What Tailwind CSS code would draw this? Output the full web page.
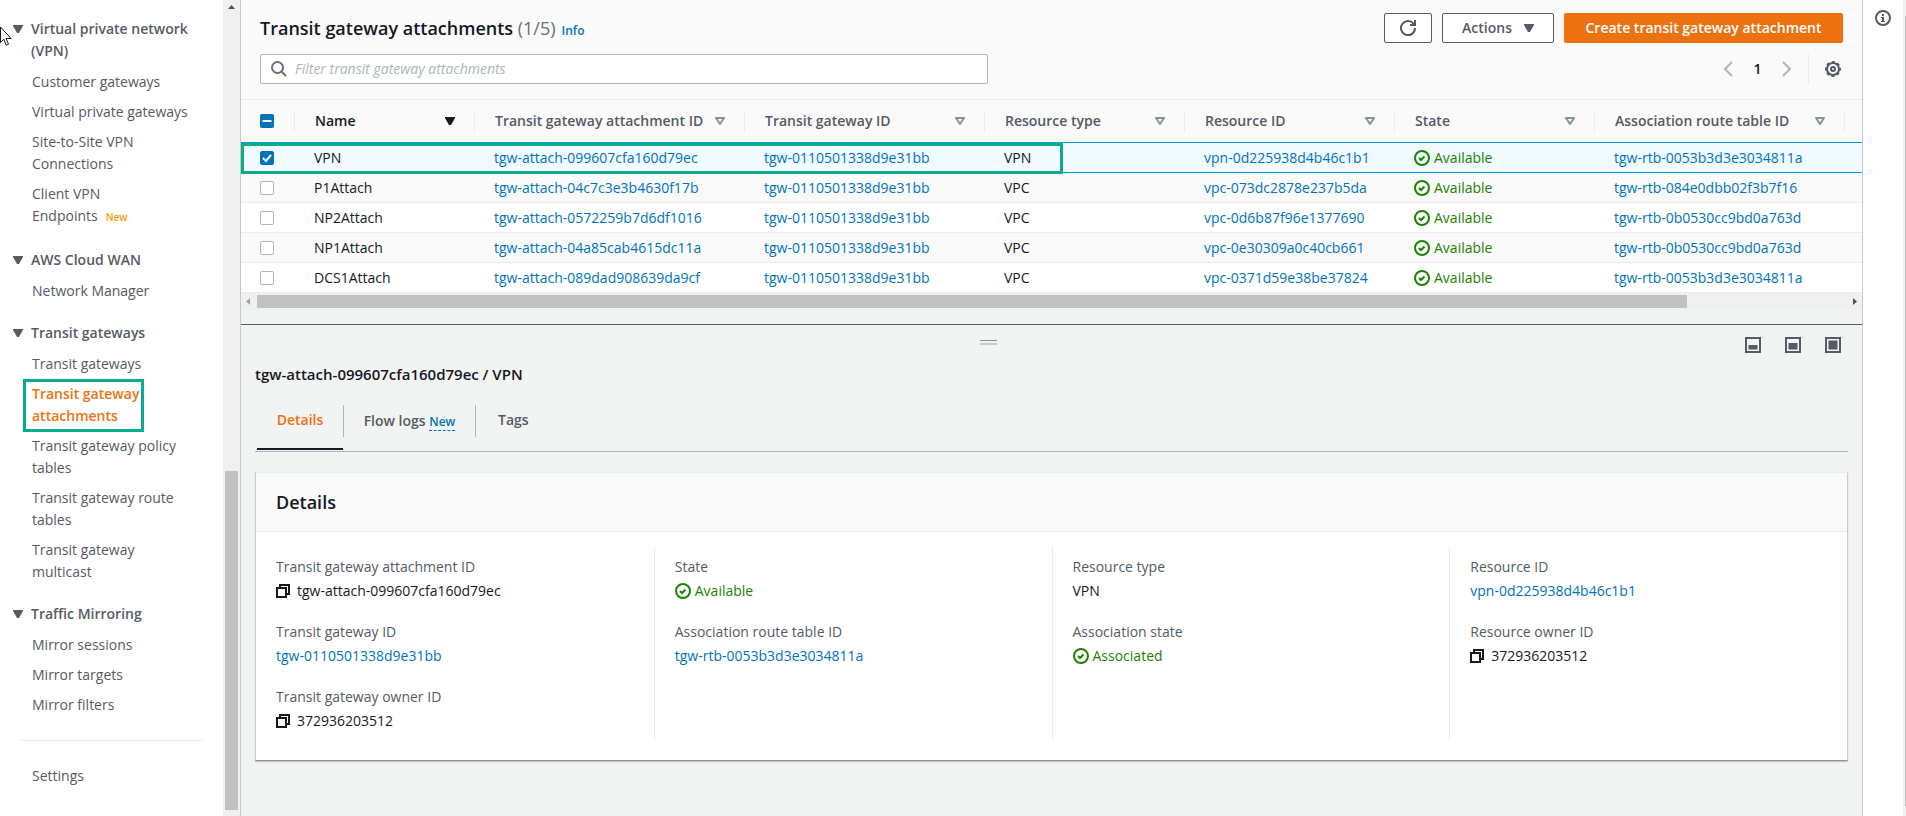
<!DOCTYPE html>
<html lang="en">
<head>
<meta charset="utf-8">
<title>Transit gateway attachments</title>
<script src="https://cdn.jsdelivr.net/npm/@tailwindcss/browser@4"></script>
</head>
<body class="h-screen overflow-hidden bg-white font-['Open_Sans','Noto_Sans',sans-serif] text-sm leading-[22px] text-[#16191f]">
<svg class="hidden" aria-hidden="true">
  <symbol id="caret" viewBox="0 0 10 8"><path d="M0 0h10v1L6 8H4L0 1z" fill="currentColor"/></symbol>
  <symbol id="sort" viewBox="0 0 10 8"><path d="M1 1h8L5 7z" fill="none" stroke="currentColor" stroke-width="2" stroke-linejoin="round"/></symbol>
  <symbol id="ok" viewBox="0 0 16 16"><g fill="none" stroke="currentColor" stroke-width="2"><circle cx="8" cy="8" r="7"/><path d="M5 8l2 2 3.500-3.500"/></g></symbol>
  <symbol id="copy" viewBox="0 0 14 14"><path d="M1 4h9v9H1zM4 4V1h9v9h-3" fill="none" stroke="currentColor" stroke-width="2"/></symbol>
</svg>
<div class="flex h-full">
  <nav class="h-full min-w-0 w-[223px] shrink-0 overflow-hidden pt-[18px] text-[#545b64]" aria-label="VPC">
    <section class="mb-[17px]">
      <h3 class="mb-[5px] flex pl-[13px] font-semibold"><svg class="mt-[7px] mr-2 h-2 w-[10px] shrink-0"><use href="#caret"/></svg><span>Virtual private network<br>(VPN)</span></h3>
      <ul class="pl-8">
        <li class="py-1"><a href="#">Customer gateways</a></li>
        <li class="py-1"><a href="#">Virtual private gateways</a></li>
        <li class="py-1"><a href="#">Site-to-Site VPN<br>Connections</a></li>
        <li class="py-1"><a href="#">Client VPN<br>Endpoints</a><span class="ml-2 text-[10px] font-semibold text-[#ff9900]">New</span></li>
      </ul>
    </section>
    <section class="mb-4">
      <h3 class="mb-[5px] flex pl-[13px] font-semibold"><svg class="mt-[7px] mr-2 h-2 w-[10px] shrink-0"><use href="#caret"/></svg>AWS Cloud WAN</h3>
      <ul class="pl-8"><li class="py-1"><a href="#">Network Manager</a></li></ul>
    </section>
    <section class="mb-4">
      <h3 class="mb-[5px] flex pl-[13px] font-semibold"><svg class="mt-[7px] mr-2 h-2 w-[10px] shrink-0"><use href="#caret"/></svg>Transit gateways</h3>
      <ul class="pl-8">
        <li class="py-1"><a href="#">Transit gateways</a></li>
        <li class="relative py-1"><a href="#" class="font-semibold text-[#ec7211]" aria-current="page">Transit gateway<br>attachments</a><span class="pointer-events-none absolute top-0 -left-[9px] h-[53px] w-[121px] border-3 border-[#0aac8e]"></span></li>
        <li class="py-1"><a href="#">Transit gateway policy<br>tables</a></li>
        <li class="py-1"><a href="#">Transit gateway route<br>tables</a></li>
        <li class="py-1"><a href="#">Transit gateway<br>multicast</a></li>
      </ul>
    </section>
    <section>
      <h3 class="mb-[5px] flex pl-[13px] font-semibold"><svg class="mt-[7px] mr-2 h-2 w-[10px] shrink-0"><use href="#caret"/></svg>Traffic Mirroring</h3>
      <ul class="pl-8">
        <li class="py-1"><a href="#">Mirror sessions</a></li>
        <li class="py-1"><a href="#">Mirror targets</a></li>
        <li class="py-1"><a href="#">Mirror filters</a></li>
      </ul>
    </section>
    <hr class="my-5 mr-5 ml-5 border-[#eaeded]">
    <a href="#" class="block py-1 pl-8">Settings</a>
  </nav>
  <div class="flex w-[17px] shrink-0 flex-col items-center bg-[#f0f0f0] pb-[6px]" aria-hidden="true">
    <svg class="mt-[5px] h-1 w-[7px]" viewBox="0 0 7 4"><path d="M0 4h7L3.500 0z" fill="#505050"/></svg>
    <div class="grow"></div>
    <div class="h-[339px] w-[13px] bg-[#c1c1c1]"></div>
  </div>

  <main class="flex min-w-0 grow flex-col border-x border-[#c3c9cc] bg-[#f2f3f3]">
    <section class="bg-[#fafafa]">
      <div class="flex items-center gap-[10px] pt-[13px] pr-[19px] pl-[19px]">
        <div class="flex items-baseline gap-[6px]">
          <h1 class="text-lg leading-[30px] font-semibold">Transit gateway attachments <span class="font-normal text-[#687078]">(1/5)</span></h1>
          <a href="#" class="text-xs font-semibold text-[#0073bb]">Info</a>
        </div>
        <div class="grow"></div>
        <button type="button" aria-label="Refresh" class="flex h-[30px] w-12 items-center justify-center rounded-xs border border-[#545b64] bg-white text-[#545b64]"><svg class="size-4" viewBox="0 0 16 16" fill="none" stroke="currentColor" stroke-width="2"><path d="M10 5h5V0M15 8a7 7 0 1 1-.7-3"/></svg></button>
        <button type="button" class="flex h-[30px] w-28 items-center justify-center gap-3 rounded-xs border border-[#545b64] bg-white font-semibold text-[#545b64]">Actions<svg class="h-2 w-[10px]"><use href="#caret"/></svg></button>
        <button type="button" class="h-[30px] w-[279px] rounded-xs bg-[#ec7211] font-semibold text-white">Create transit gateway attachment</button>
      </div>
      <div class="flex items-center pt-[11px] pr-[21px] pb-[15px] pl-[19px]">
        <label class="flex h-[30px] w-[728px] items-center rounded-xs border border-[#aab7b8] bg-white pl-[10px]">
          <svg class="size-4 shrink-0 text-[#687078]" viewBox="0 0 16 16" fill="none" stroke="currentColor" stroke-width="2"><circle cx="6.500" cy="6.500" r="5.500"/><path d="M10.500 10.500L15 15"/></svg>
          <input type="search" aria-label="Filter transit gateway attachments" placeholder="Filter transit gateway attachments" class="ml-2 w-full bg-transparent outline-none placeholder:text-[#aab7b8] placeholder:italic">
        </label>
        <div class="grow"></div>
        <button type="button" aria-label="Previous page" class="text-[#aab7b8]"><svg class="h-4 w-[10px]" viewBox="0 0 10 16" fill="none" stroke="currentColor" stroke-width="2"><path d="M9 1L2 8l7 7"/></svg></button>
        <button type="button" class="w-[49px] text-center font-semibold">1</button>
        <button type="button" aria-label="Next page" class="text-[#aab7b8]"><svg class="h-4 w-[10px]" viewBox="0 0 10 16" fill="none" stroke="currentColor" stroke-width="2"><path d="M1 1l7 7-7 7"/></svg></button>
        <span class="mx-4 h-[30px] w-px bg-[#eaeded]"></span>
        <button type="button" aria-label="Preferences" class="text-[#545b64]"><svg class="size-4" viewBox="0 0 16 16" fill="none" stroke="currentColor" stroke-width="2"><circle cx="8" cy="8" r="6"/><circle cx="8" cy="8" r="7" stroke-dasharray="3 2.498" stroke-dashoffset="1.500"/><circle cx="8" cy="8" r="2"/></svg></button>
      </div>

      <div class="relative">
        <table class="w-full table-fixed border-collapse text-left">
          <colgroup><col class="w-[54px]"><col class="w-[180px]"><col class="w-[270px]"><col class="w-[240px]"><col class="w-[200px]"><col class="w-[210px]"><col class="w-[200px]"><col class="w-[250px]"><col></colgroup>
          <thead>
            <tr class="h-[43px] border-t border-[#eaeded] text-[#545b64]">
              <th class="p-0"><div class="flex h-[21px] items-center border-r border-[#eaeded] pl-[19px]"><span class="relative size-[14px]"><input type="checkbox" checked aria-label="Select all" class="block size-[14px] appearance-none rounded-xs bg-[#0073bb]"><svg class="pointer-events-none absolute inset-0 size-[14px]" viewBox="0 0 14 14"><path d="M2.500 7h9" stroke="#fff" stroke-width="2"/></svg></span></div></th>
              <th class="p-0 font-semibold"><div class="flex h-[21px] items-center justify-between border-r border-[#eaeded] pr-[19px] pl-5 text-[#16191f]">Name<svg class="h-2 w-[10px]"><use href="#caret"/></svg></div></th>
              <th class="p-0 font-semibold"><div class="flex h-[21px] items-center justify-between border-r border-[#eaeded] pr-[19px] pl-5">Transit gateway attachment ID<svg class="h-2 w-[10px] text-[#879596]"><use href="#sort"/></svg></div></th>
              <th class="p-0 font-semibold"><div class="flex h-[21px] items-center justify-between border-r border-[#eaeded] pr-[19px] pl-5">Transit gateway ID<svg class="h-2 w-[10px] text-[#879596]"><use href="#sort"/></svg></div></th>
              <th class="p-0 font-semibold"><div class="flex h-[21px] items-center justify-between border-r border-[#eaeded] pr-[19px] pl-5">Resource type<svg class="h-2 w-[10px] text-[#879596]"><use href="#sort"/></svg></div></th>
              <th class="p-0 font-semibold"><div class="flex h-[21px] items-center justify-between border-r border-[#eaeded] pr-[19px] pl-5">Resource ID<svg class="h-2 w-[10px] text-[#879596]"><use href="#sort"/></svg></div></th>
              <th class="p-0 font-semibold"><div class="flex h-[21px] items-center justify-between border-r border-[#eaeded] pr-[19px] pl-5">State<svg class="h-2 w-[10px] text-[#879596]"><use href="#sort"/></svg></div></th>
              <th class="p-0 font-semibold"><div class="flex h-[21px] items-center justify-between border-r border-[#eaeded] pr-[19px] pl-5">Association route table ID<svg class="h-2 w-[10px] text-[#879596]"><use href="#sort"/></svg></div></th>
              <th class="p-0"></th>
            </tr>
          </thead>
          <tbody id="rows"></tbody>
        </table>
        <div class="pointer-events-none absolute top-11 left-0 h-[31px] w-[822px] border-3 border-[#0aac8e]"></div>
      </div>
    </section>
    <div class="flex h-[17px] shrink-0 items-center bg-[#f0f0f0] pr-[5px] pl-[5px]" aria-hidden="true">
      <svg class="mr-[7px] h-[7px] w-1" viewBox="0 0 4 7"><path d="M4 0v7L0 3.500z" fill="#a3a3a3"/></svg>
      <div class="h-[13px] w-[1430px] bg-[#c1c1c1]"></div>
      <div class="grow"></div>
      <svg class="h-[7px] w-1" viewBox="0 0 4 7"><path d="M0 0v7l4-3.500z" fill="#505050"/></svg>
    </div>

    <section class="mt-[14px] grow border-t border-[#545b64] px-[14px]">
      <div class="grid grid-cols-[1fr_auto_1fr_126px] pt-3">
        <span></span>
        <div class="mt-[3px] flex w-[17px] flex-col gap-[2px]" role="separator" aria-label="Resize panel"><span class="h-px bg-[#879596]"></span><span class="h-[2px] bg-[#c5caca]"></span></div>
        <span></span>
        <div class="flex justify-end gap-6 pr-[7px] text-[#545b64]">
          <button type="button" aria-label="Small panel"><svg class="block size-4" viewBox="0 0 16 16"><path d="M1 1h14v14H1z" fill="none" stroke="currentColor" stroke-width="2"/><path d="M3.500 8h9v4.500h-9z" fill="currentColor"/></svg></button>
          <button type="button" aria-label="Medium panel"><svg class="block size-4" viewBox="0 0 16 16"><path d="M1 1h14v14H1z" fill="none" stroke="currentColor" stroke-width="2"/><path d="M3.500 6h9v6.500h-9z" fill="currentColor"/></svg></button>
          <button type="button" aria-label="Full panel"><svg class="block size-4" viewBox="0 0 16 16"><path d="M1 1h14v14H1z" fill="none" stroke="currentColor" stroke-width="2"/><path d="M3.500 3.500h9v9h-9z" fill="currentColor"/></svg></button>
        </div>
      </div>
      <h2 class="mt-[10px] text-[15px] font-semibold">tgw-attach-099607cfa160d79ec / VPN</h2>
      <div class="mt-5 flex h-[47px] items-start border-b border-[#aab7b8] font-semibold text-[#545b64]" role="tablist">
        <button type="button" role="tab" aria-selected="true" class="ml-[2px] h-[45px] w-[86px] border-b-2 border-[#16191f] pb-[13px] text-[#ec7211]">Details</button>
        <button type="button" role="tab" class="h-8 w-[133px] border-x border-[#aab7b8]">Flow logs <span class="border-b border-dashed border-[#0073bb] text-xs text-[#0073bb]">New</span></button>
        <button type="button" role="tab" class="h-[30px] px-[22px]">Tags</button>
      </div>
      <div class="mt-5 border border-t-[#eaeded] border-r-[#c8cdce] border-b-[#879596] border-l-[#c8cdce] bg-white shadow-[0_1px_1px_#001c2433]">
        <h3 class="border-b border-[#eaeded] bg-[#fafafa] px-5 py-[18px] text-lg leading-[22px] font-semibold">Details</h3>
        <dl class="mt-[15px] mb-5 grid grid-cols-4 text-[#545b64]">
          <div class="flex flex-col gap-5 py-[9px] pl-5">
            <div><dt>Transit gateway attachment ID</dt><dd class="flex h-[23px] items-center gap-[7px] pt-[2px] text-[#16191f]"><button type="button" aria-label="Copy attachment ID"><svg class="size-[14px]"><use href="#copy"/></svg></button>tgw-attach-099607cfa160d79ec</dd></div>
            <div><dt>Transit gateway ID</dt><dd class="flex h-[23px] items-center pt-[2px]"><a href="#" class="text-[#0073bb]">tgw-0110501338d9e31bb</a></dd></div>
            <div><dt>Transit gateway owner ID</dt><dd class="flex h-[23px] items-center gap-[7px] pt-[2px] text-[#16191f]"><button type="button" aria-label="Copy owner ID"><svg class="size-[14px]"><use href="#copy"/></svg></button>372936203512</dd></div>
          </div>
          <div class="flex flex-col gap-5 border-l border-[#eaeded] py-[9px] pl-5">
            <div><dt>State</dt><dd class="flex h-[23px] items-center gap-1 pt-[2px] text-[#1d8102]"><svg class="size-4"><use href="#ok"/></svg>Available</dd></div>
            <div><dt>Association route table ID</dt><dd class="flex h-[23px] items-center pt-[2px]"><a href="#" class="text-[#0073bb]">tgw-rtb-0053b3d3e3034811a</a></dd></div>
          </div>
          <div class="flex flex-col gap-5 border-l border-[#eaeded] py-[9px] pl-5">
            <div><dt>Resource type</dt><dd class="flex h-[23px] items-center pt-[2px] text-[#16191f]">VPN</dd></div>
            <div><dt>Association state</dt><dd class="flex h-[23px] items-center gap-1 pt-[2px] text-[#1d8102]"><svg class="size-4"><use href="#ok"/></svg>Associated</dd></div>
          </div>
          <div class="flex flex-col gap-5 border-l border-[#eaeded] py-[9px] pl-5">
            <div><dt>Resource ID</dt><dd class="flex h-[23px] items-center pt-[2px]"><a href="#" class="text-[#0073bb]">vpn-0d225938d4b46c1b1</a></dd></div>
            <div><dt>Resource owner ID</dt><dd class="flex h-[23px] items-center gap-[7px] pt-[2px] text-[#16191f]"><button type="button" aria-label="Copy resource owner ID"><svg class="size-[14px]"><use href="#copy"/></svg></button>372936203512</dd></div>
          </div>
        </dl>
      </div>
    </section>
  </main>
  <aside class="w-10 shrink-0 pt-[10px] pl-3">
    <button type="button" aria-label="Info panel" class="block text-[#545b64]"><svg class="block size-4" viewBox="0 0 16 16"><circle cx="8" cy="8" r="7" fill="none" stroke="currentColor" stroke-width="2"/><path d="M7 4h2v2H7zM6 7h3v4h1v1H6v-1h1V8H6z" fill="currentColor"/></svg></button>
  </aside>
  <div class="flex w-[3px] shrink-0 justify-end bg-[#f0f0f0] pt-4 pb-[10px]" aria-hidden="true"><div class="w-px bg-[#c1c1c1]"></div></div>
</div>
<svg class="pointer-events-none absolute top-[26px] left-0 h-5 w-3" viewBox="0 0 12 20" aria-hidden="true"><path d="M.5 1v15.500l3.300-3.300 2.400 6 2.300-1-2.400-5.700h5z" fill="#fff" stroke="#16191f"/></svg>
<script>
const data = [
  ['VPN', 'tgw-attach-099607cfa160d79ec', 'VPN', 'vpn-0d225938d4b46c1b1', 'tgw-rtb-0053b3d3e3034811a'],
  ['P1Attach', 'tgw-attach-04c7c3e3b4630f17b', 'VPC', 'vpc-073dc2878e237b5da', 'tgw-rtb-084e0dbb02f3b7f16'],
  ['NP2Attach', 'tgw-attach-0572259b7d6df1016', 'VPC', 'vpc-0d6b87f96e1377690', 'tgw-rtb-0b0530cc9bd0a763d'],
  ['NP1Attach', 'tgw-attach-04a85cab4615dc11a', 'VPC', 'vpc-0e30309a0c40cb661', 'tgw-rtb-0b0530cc9bd0a763d'],
  ['DCS1Attach', 'tgw-attach-089dad908639da9cf', 'VPC', 'vpc-0371d59e38be37824', 'tgw-rtb-0053b3d3e3034811a'],
];
const link = t => `<td class="p-0 pl-[19px]"><a href="#" class="text-[#0073bb]">${t}</a></td>`;
document.getElementById('rows').innerHTML = data.map(([name, id, type, res, rtb], i) => `
  <tr class="${i === 0 ? 'h-[30px] border-y border-[#00a1c9] bg-[#f1faff]' : i % 2 ? 'h-[30px] border-b border-[#eaeded] bg-[#fafafa]' : 'h-[30px] border-b border-[#eaeded] bg-white'}">
    <td class="p-0 pl-[19px]"><span class="relative block size-[14px]"><input type="checkbox" aria-label="Select ${name}" ${i === 0 ? 'checked' : ''} class="block size-[14px] appearance-none rounded-xs border border-[#aab7b8] bg-white checked:border-[#0073bb] checked:bg-[#0073bb]">${i === 0 ? '<svg class="pointer-events-none absolute inset-0 size-[14px]" viewBox="0 0 14 14"><path d="M3 7l3 3 5-6" fill="none" stroke="#fff" stroke-width="2"/></svg>' : ''}</span></td>
    <td class="p-0 pl-[19px]">${name}</td>
    ${link(id)}${link('tgw-0110501338d9e31bb')}
    <td class="p-0 pl-[19px]">${type}</td>
    ${link(res)}
    <td class="p-0 pl-[19px]"><span class="flex items-center gap-1 text-[#1d8102]"><svg class="size-4"><use href="#ok"/></svg>Available</span></td>
    ${link(rtb)}
    <td class="p-0"></td>
  </tr>`).join('');
</script>
</body>
</html>
